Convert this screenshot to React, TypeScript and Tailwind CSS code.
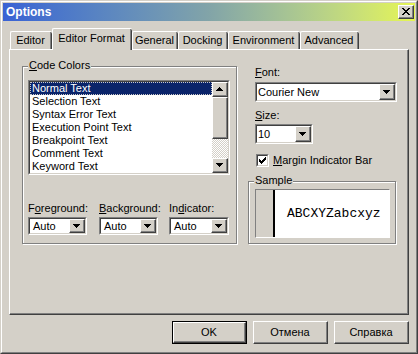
import type { ReactNode } from "react";

const CLOSE_X = [
  "XX....XX",
  ".XX..XX.",
  "..XXXX..",
  "...XX...",
  "..XXXX..",
  ".XX..XX.",
  "XX....XX",
];

const ARROW_DOWN = ["XXXXXXX", ".XXXXX.", "..XXX..", "...X..."];
const ARROW_UP = ["...X...", "..XXX..", ".XXXXX.", "XXXXXXX"];

const CHECK = [
  "......X",
  ".....XX",
  "X...XXX",
  "XX.XXX.",
  "XXXXX..",
  ".XXX...",
  "..X....",
];

const Pixels = ({ rows }: { rows: string[] }) => (
  <svg width={rows[0].length} height={rows.length} shapeRendering="crispEdges">
    {rows.flatMap((r, y) =>
      [...r].map((c, x) =>
        c === "X" ? <rect key={`${x}-${y}`} x={x} y={y} width="1" height="1" fill="#000" /> : null
      )
    )}
  </svg>
);

const Raised = ({ className = "", children }: { className?: string; children?: ReactNode }) => (
  <div className={`border border-t-white border-l-white border-r-[#404040] border-b-[#404040] bg-[#d4d0c8] ${className}`}>
    <div className="w-full h-full border-r border-b border-[#808080] flex items-center justify-center">
      {children}
    </div>
  </div>
);

const Sunken = ({ className = "", inner = "bg-white", children }: { className?: string; inner?: string; children?: ReactNode }) => (
  <div className={`border border-t-[#808080] border-l-[#808080] border-r-white border-b-white ${className}`}>
    <div className={`w-full h-full border border-t-[#404040] border-l-[#404040] border-r-[#d4d0c8] border-b-[#d4d0c8] flex ${inner}`}>
      {children}
    </div>
  </div>
);

const Combo = ({ value, className, pad = "pl-[1px]" }: { value: string; className: string; pad?: string }) => (
  <Sunken className={className}>
    <div className={`flex-1 flex items-center ${pad}`}>{value}</div>
    <Raised className="w-[16px] h-full">
      <Pixels rows={ARROW_DOWN} />
    </Raised>
  </Sunken>
);

const GroupBox = ({ label, className, children }: { label: ReactNode; className: string; children?: ReactNode }) => (
  <div className={`relative border border-[#808080] shadow-[inset_1px_1px_0_#fff,1px_1px_0_#fff] ${className}`}>
    <span className="absolute top-[-8px] left-[5px] px-[1px] bg-[#d4d0c8]">{label}</span>
    {children}
  </div>
);

const tabs = [
  { name: "Editor", w: "w-[42px]" },
  { name: "Editor Format", w: "w-[80px]", active: true },
  { name: "General", w: "w-[46px]" },
  { name: "Docking", w: "w-[50px]" },
  { name: "Environment", w: "w-[72px]" },
  { name: "Advanced", w: "w-[59px]" },
];

const items = [
  "Normal Text",
  "Selection Text",
  "Syntax Error Text",
  "Execution Point Text",
  "Breakpoint Text",
  "Comment Text",
  "Keyword Text",
];

export default function App() {
  return (
    <div className="w-[418px] h-[354px] bg-[#d4d0c8] font-['Liberation_Sans',Arial,sans-serif] text-[11px] leading-[13px] text-black select-none">
      <div className="w-full h-full border border-t-[#d4d0c8] border-l-[#d4d0c8] border-r-[#404040] border-b-[#404040]">
        <div className="w-full h-full border border-t-white border-l-white border-r-[#808080] border-b-[#808080] p-[1px] flex flex-col">
          {/* title bar */}
          <div className="h-[18px] shrink-0 flex items-center justify-between bg-linear-to-r from-[#3a62d4] via-[#82a4a8] to-[#e6f650]">
            <span className="pl-[3px] font-bold text-white text-[12px]">Options</span>
            <Raised className="w-[16px] h-[14px] mr-[1px]">
              <Pixels rows={CLOSE_X} />
            </Raised>
          </div>

          {/* tabs */}
          <div className="relative z-10 mt-[7px] ml-[7px] h-[21px] flex items-end">
            {tabs.map((t) =>
              t.active ? (
                <div
                  key={t.name}
                  className={`${t.w} h-[22px] -mb-px bg-[#d4d0c8] border-l border-t border-white rounded-t-[2px] flex`}
                >
                  <div className="flex-1 border-r border-[#404040] rounded-tr-[2px]">
                    <div className="h-full border-r border-[#808080] flex items-center justify-center pb-[3px]">
                      {t.name}
                    </div>
                  </div>
                </div>
              ) : (
                <div
                  key={t.name}
                  className={`${t.w} h-[18px] bg-[#d4d0c8] border-l border-t border-white rounded-t-[2px] flex`}
                >
                  <div className="flex-1 border-r border-[#404040] rounded-tr-[2px]">
                    <div className="h-full border-r border-[#808080] flex items-center justify-center">
                      {t.name}
                    </div>
                  </div>
                </div>
              )
            )}
          </div>

          {/* panel */}
          <div className="ml-[6px] w-[400px] h-[266px] shrink-0 border-t border-l border-white border-r border-b border-r-[#404040] border-b-[#404040]">
            <div className="w-full h-full border-r border-b border-[#808080] flex pl-[12px] pt-[16px]">
              {/* code colors */}
              <GroupBox
                label={<><span className="underline">C</span>ode Colors</>}
                className="w-[215px] h-[178px] pl-[5px] pt-[13px]"
              >
                <Sunken className="w-[202px] h-[95px]">
                  <div className="flex-1 flex flex-col">
                    {items.map((it, i) => (
                      <div
                        key={it}
                        className={`h-[13px] pl-[2px] whitespace-nowrap ${
                          i === 0
                            ? "bg-[#0a246a] text-white outline-1 outline-dotted -outline-offset-1 outline-[#c8c8c8]"
                            : ""
                        }`}
                      >
                        {it}
                      </div>
                    ))}
                  </div>
                  <div className="w-[16px] flex flex-col">
                    <Raised className="h-[15px]">
                      <Pixels rows={ARROW_UP} />
                    </Raised>
                    <Raised className="h-[42px]" />
                    <div className="flex-1 bg-[image:repeating-conic-gradient(#ffffff_0_25%,#d4d0c8_0_50%)] bg-size-[2px_2px]" />
                    <Raised className="h-[15px]">
                      <Pixels rows={ARROW_DOWN} />
                    </Raised>
                  </div>
                </Sunken>

                <div className="mt-[27px] flex">
                  <div className="w-[59px]">
                    <div>F<span className="underline">o</span>reground:</div>
                    <Combo value="Auto" pad="pl-[3px]" className="mt-[2px] w-[59px] h-[18px]" />
                  </div>
                  <div className="ml-[12px] w-[59px]">
                    <div><span className="underline">B</span>ackground:</div>
                    <Combo value="Auto" pad="pl-[3px]" className="mt-[2px] w-[59px] h-[18px]" />
                  </div>
                  <div className="ml-[11px] w-[60px]">
                    <div>In<span className="underline">d</span>icator:</div>
                    <Combo value="Auto" pad="pl-[3px]" className="mt-[2px] w-[60px] h-[18px]" />
                  </div>
                </div>
              </GroupBox>

              {/* right column */}
              <div className="ml-[11px] w-[150px] flex flex-col">
                <div className="pl-[7px]">
                  <span className="underline">F</span>ont:
                </div>
                <Combo value="Courier New" className="ml-[7px] mt-[3px] w-[142px] h-[20px]" />
                <div className="pl-[7px] mt-[7px]">
                  <span className="underline">S</span>ize:
                </div>
                <Combo value="10" className="ml-[7px] mt-[2px] w-[58px] h-[20px]" />
                <div className="ml-[8px] mt-[10px] flex items-center h-[13px]">
                  <Sunken className="w-[13px] h-[13px]" inner="bg-white items-center justify-center">
                    <Pixels rows={CHECK} />
                  </Sunken>
                  <span className="ml-[4px]">
                    <span className="underline">M</span>argin Indicator Bar
                  </span>
                </div>
                <GroupBox label="Sample" className="mt-[14px] w-[148px] h-[63px] pl-[6px] pt-[7px]">
                  <div className="w-[135px] h-[49px] flex border border-t-[#808080] border-l-[#808080] border-r-white border-b-white">
                    <div className="w-[19px] bg-[#d4d0c8] border-r-2 border-black" />
                    <div className="flex-1 bg-white flex items-center pl-[12px] font-['Liberation_Mono','Courier_New',monospace] text-[13px]">
                      ABCXYZabcxyz
                    </div>
                  </div>
                </GroupBox>
              </div>
            </div>
          </div>

          {/* buttons */}
          <div className="mt-[6px] pr-[6px] flex justify-end gap-[6px]">
            <div className="w-[75px] h-[23px] border border-black">
              <Raised className="w-full h-full">OK</Raised>
            </div>
            <Raised className="w-[75px] h-[23px]">Отмена</Raised>
            <Raised className="w-[75px] h-[23px]">Справка</Raised>
          </div>
        </div>
      </div>
    </div>
  );
}
